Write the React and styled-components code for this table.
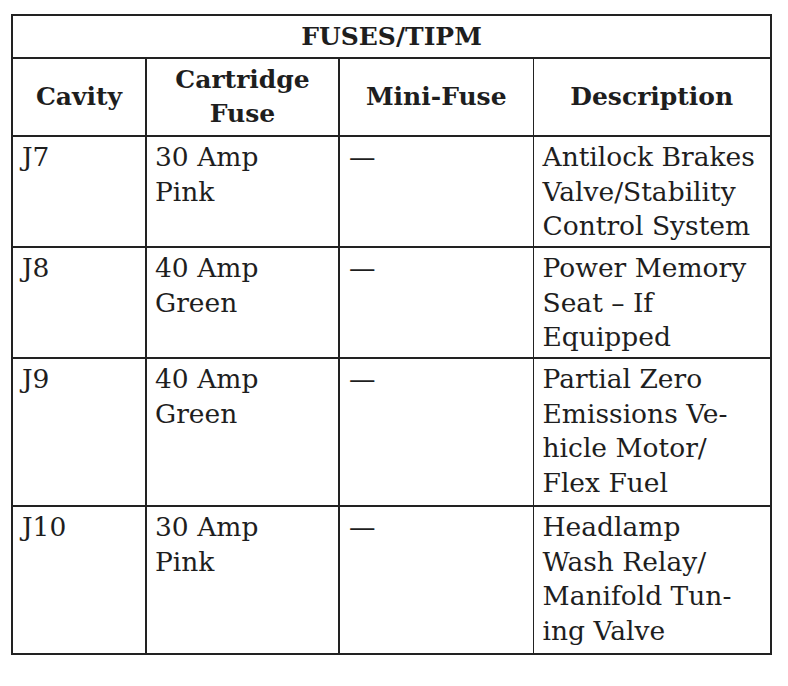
import React from 'react';
import styled, { createGlobalStyle } from 'styled-components';

const GlobalStyle = createGlobalStyle`
  html, body {
    margin: 0;
    padding: 0;
    background: #fff;
  }
  body {
    font-family: 'DejaVu Serif', 'Liberation Serif', serif;
    color: #1e1e1e;
  }
`;

const rows = [
  {
    cavity: 'J7',
    cartridge: ['30 Amp', 'Pink'],
    mini: '—',
    description: ['Antilock Brakes', 'Valve/Stability', 'Control System'],
  },
  {
    cavity: 'J8',
    cartridge: ['40 Amp', 'Green'],
    mini: '—',
    description: ['Power Memory', 'Seat – If', 'Equipped'],
  },
  {
    cavity: 'J9',
    cartridge: ['40 Amp', 'Green'],
    mini: '—',
    description: ['Partial Zero', 'Emissions Ve-', 'hicle Motor/', 'Flex Fuel'],
  },
  {
    cavity: 'J10',
    cartridge: ['30 Amp', 'Pink'],
    mini: '—',
    description: ['Headlamp', 'Wash Relay/', 'Manifold Tun-', 'ing Valve'],
  },
];

const Lines = ({ items }) =>
  items.map((line, i) => (
    <Line key={i}>{line}</Line>
  ));

const App = () => (
  <Page>
    <GlobalStyle />
    <Table>
      <colgroup>
        <col style={{ width: 134 }} />
        <col style={{ width: 193 }} />
        <col style={{ width: 194 }} />
        <col style={{ width: 238 }} />
      </colgroup>
      <thead>
        <tr>
          <Title colSpan={4}>FUSES/TIPM</Title>
        </tr>
        <tr>
          <Head>Cavity</Head>
          <Head>
            <Line>Cartridge</Line>
            <Line>Fuse</Line>
          </Head>
          <Head $thin>Mini-Fuse</Head>
          <Head>Description</Head>
        </tr>
      </thead>
      <tbody>
        {rows.map(row => (
          <Row key={row.cavity} $lines={row.description.length}>
            <Cell>{row.cavity}</Cell>
            <Cell $pad={8}>
              <Lines items={row.cartridge} />
            </Cell>
            <Cell $thin>{row.mini}</Cell>
            <Cell>
              <Lines items={row.description} />
            </Cell>
          </Row>
        ))}
      </tbody>
    </Table>
  </Page>
);

const Page = styled.div`
  padding: 14px 0 0 11px;
`;

const Table = styled.table`
  border-collapse: collapse;
  table-layout: fixed;
  width: 760px;
  border: 2px solid #222;
`;

const Title = styled.th`
  height: 41px;
  padding: 0;
  font-size: 25px;
  font-weight: 700;
  text-align: center;
  border-bottom: 2px solid #222;
`;

const Head = styled.th`
  height: 76px;
  padding: 0 6px;
  font-size: 25px;
  font-weight: 700;
  line-height: 34px;
  text-align: center;
  vertical-align: middle;
  border-right: ${p => (p.$thin ? '1px' : '2px')} solid #222;
  border-bottom: 2px solid #222;
`;

const Row = styled.tr`
  height: ${p => (p.$lines === 4 ? 148 : 111)}px;
`;

const Cell = styled.td`
  padding: 3px 9px 0 ${p => p.$pad || 9}px;
  font-size: 26.5px;
  line-height: 34.5px;
  vertical-align: top;
  text-align: left;
  border-right: ${p => (p.$thin ? '1px' : '2px')} solid #222;
  border-bottom: 2px solid #222;
`;

const Line = styled.div`
  white-space: nowrap;
`;

export default App;
